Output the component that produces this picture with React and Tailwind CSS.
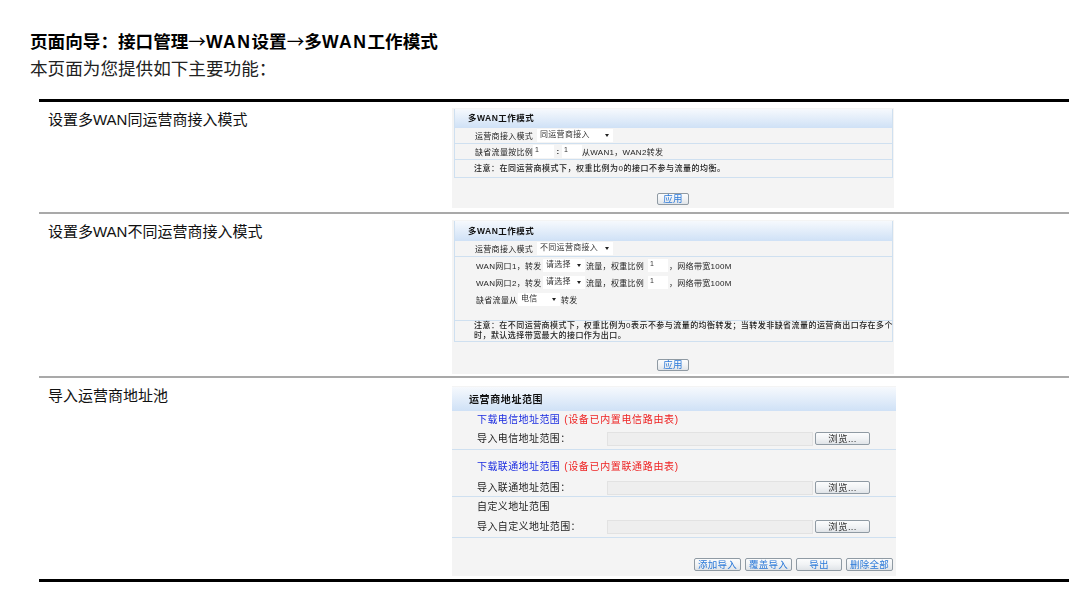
import React from "react";

const Sel = ({ w, children }) => (
  <span className={`${w} h-[13px] inline-flex items-center justify-between bg-white pl-[3px] pr-[4px] text-[8px] text-[#333] shrink-0`}>
    <span className="-mt-[2px] whitespace-nowrap">{children}</span>
    <span className="w-0 h-0 border-x-[2.5px] border-x-transparent border-t-[3px] border-t-[#222]" />
  </span>
);

const Inp = ({ w = "w-[21px]" }) => (
  <span className={`${w} h-[13px] inline-flex bg-white pl-[2px] text-[7px] leading-[9px] text-[#333] shrink-0`}>1</span>
);

const Btn = ({ w, children, color = "text-[#2a78d8]", h = "h-[12px]" }) => (
  <span className={`${w} ${h} inline-flex items-center justify-center rounded-[2px] border border-[#8f9aa3] bg-gradient-to-b from-[#fbfcfd] via-[#f1f3f5] to-[#e0e4e8] text-[9.5px] leading-none ${color} shrink-0`}>
    {children}
  </span>
);

const Header = ({ h, pl, size, children }) => (
  <div className={`${h} ${pl} ${size} flex items-center font-bold text-[#111] bg-gradient-to-b from-[#f6f9fd] to-[#cfe1f6]`}>
    {children}
  </div>
);

const rowLine = "border-b border-[#cfe0f0]";

function Panel1() {
  return (
    <div className="w-[442px] h-[100px] bg-[#f4f4f4] pt-px">
      <div className="ml-[2px] mr-[1px] border-x border-b border-[#cfe0f0]">
        <Header h="h-[19px]" pl="pl-[13px]" size="text-[8.5px] tracking-[0.5px]">多WAN工作模式</Header>
        <div className={`h-[16px] pl-[20px] flex items-center ${rowLine}`}>
          <span className="w-[62px] whitespace-nowrap mt-[1px]">运营商接入模式</span>
          <Sel w="w-[76px]">同运营商接入</Sel>
        </div>
        <div className={`h-[16px] pl-[20px] flex items-center ${rowLine}`}>
          <span className="w-[58px] whitespace-nowrap mt-[1px]">缺省流量按比例</span>
          <Inp />
          <span className="w-[8px] text-center font-bold">:</span>
          <Inp w="w-[20px]" />
          <span className="whitespace-nowrap mt-[1px]">从WAN1，WAN2转发</span>
        </div>
        <div className="h-[17px] pl-[19px] flex items-center whitespace-nowrap font-medium tracking-[0.5px]">
          注意：在同运营商模式下，权重比例为0的接口不参与流量的均衡。
        </div>
      </div>
      <div className="flex justify-center pt-[15px]">
        <Btn w="w-[32px]">应用</Btn>
      </div>
    </div>
  );
}

const WanRow = ({ n }) => (
  <div className="h-[17px] pl-[21px] flex items-center whitespace-nowrap">
    <span className="w-[67px] mt-[1px]">WAN网口{n}，转发</span>
    <Sel w="w-[42px]">请选择</Sel>
    <span className="w-[63px] pl-px mt-[1px]">流量，权重比例</span>
    <Inp w="w-[20px]" />
    <span className="pl-px mt-[1px]">，网络带宽100M</span>
  </div>
);

function Panel2() {
  return (
    <div className="w-[442px] h-[154px] bg-[#f4f4f4] pt-px">
      <div className="ml-[2px] mr-[1px] border-x border-b border-[#cfe0f0]">
        <Header h="h-[20px]" pl="pl-[13px]" size="text-[8.5px] tracking-[0.5px]">多WAN工作模式</Header>
        <div className={`h-[16px] pl-[20px] flex items-center ${rowLine}`}>
          <span className="w-[62px] whitespace-nowrap mt-[1px]">运营商接入模式</span>
          <Sel w="w-[76px]">不同运营商接入</Sel>
        </div>
        <div className={`h-[64px] ${rowLine}`}>
          <WanRow n={1} />
          <WanRow n={2} />
          <div className="h-[17px] pl-[21px] flex items-center whitespace-nowrap">
            <span className="w-[42px] mt-[1px]">缺省流量从</span>
            <Sel w="w-[42px]">电信</Sel>
            <span className="pl-px mt-[1px]">转发</span>
          </div>
        </div>
        <div className="h-[20px] pl-[19px] leading-[10px] font-medium tracking-[0.45px]">
          <div className="whitespace-nowrap">注意：在不同运营商模式下，权重比例为0表示不参与流量的均衡转发；当转发非缺省流量的运营商出口存在多个</div>
          <div className="whitespace-nowrap">时，默认选择带宽最大的接口作为出口。</div>
        </div>
      </div>
      <div className="flex justify-center pt-[17px]">
        <Btn w="w-[32px]">应用</Btn>
      </div>
    </div>
  );
}

const ImportRow = ({ label }) => (
  <div className="flex items-center h-[15px] whitespace-nowrap">
    <span className="w-[130px] tracking-[0.4px]">{label}</span>
    <span className="w-[206px] h-[14px] bg-[#eeeeee] border border-[#e2e2e2]" />
    <Btn w="w-[55px] ml-[2px]" h="h-[13px]" color="text-[#333]">浏览...</Btn>
  </div>
);

const Dl = ({ a, b }) => (
  <div className="h-[15px] flex items-center whitespace-nowrap tracking-[0.4px]">
    <span className="text-[#1a2be0]">{a}</span>
    <span className="text-[#ee2222] ml-[4px] tracking-[0.65px]">{b}</span>
  </div>
);

function Panel3() {
  return (
    <div className="w-[444px] h-[190px] bg-[#f4f4f4] pt-px text-[10px]">
      <Header h="h-[24px]" pl="pl-[17px]" size="text-[10px] tracking-[0.6px]">运营商地址范围</Header>
      <div className="h-[39px] pl-[25px] pt-[1px] border-b border-[#cfe0f0]">
        <Dl a="下载电信地址范围" b="(设备已内置电信路由表)" />
        <div className="mt-[4px]"><ImportRow label="导入电信地址范围：" /></div>
      </div>
      <div className="h-[47px] pl-[25px] pt-[9px] border-b border-[#cfe0f0]">
        <Dl a="下载联通地址范围" b="(设备已内置联通路由表)" />
        <div className="mt-[6px]"><ImportRow label="导入联通地址范围：" /></div>
      </div>
      <div className="h-[41px] pl-[25px] pt-[2px] border-b border-[#cfe0f0]">
        <div className="h-[15px] flex items-center tracking-[0.4px]">自定义地址范围</div>
        <div className="mt-[5px]"><ImportRow label="导入自定义地址范围：" /></div>
      </div>
      <div className="flex justify-end gap-[4px] pt-[20px] pr-[3px]">
        <Btn w="w-[47px]" h="h-[13px]">添加导入</Btn>
        <Btn w="w-[47px]" h="h-[13px]">覆盖导入</Btn>
        <Btn w="w-[46px]" h="h-[13px]">导出</Btn>
        <Btn w="w-[47px]" h="h-[13px]">删除全部</Btn>
      </div>
    </div>
  );
}

const Row = ({ label, children, cls, top = "pt-[6px]" }) => (
  <div className={`flex items-start ${cls}`}>
    <div className="w-[413px] shrink-0 pl-[9px] pt-[8px] text-[15px] leading-5 text-[#111]">{label}</div>
    <div className={`${top} text-[8px] leading-[11px] text-[#222] tracking-[0.3px] blur-[0.3px]`}>{children}</div>
  </div>
);

const Arrow = () => <span className="font-['Noto_Sans_CJK_SC'] font-normal">→</span>;
const Wan = () => <span className="tracking-[1.5px]">WAN</span>;

export default function App() {
  return (
    <div className="w-[1069px] h-[601px] overflow-hidden bg-white font-['Liberation_Sans','Noto_Sans_CJK_SC',sans-serif] text-black">
      <div className="pl-[30px] pt-[29px]">
        <div className="text-[17.6px] leading-[24px] font-bold whitespace-nowrap">
          页面向导：接口管理<Arrow /><Wan />设置<Arrow />多<Wan />工作模式
        </div>
        <div className="text-[17.6px] leading-[30px] text-[#222]">本页面为您提供如下主要功能：</div>
      </div>
      <div className="ml-[39px] mt-[15px] border-y-[3px] border-black">
        <Row label="设置多WAN同运营商接入模式" cls="h-[112px] border-b-2 border-[#a9a9a9]"><Panel1 /></Row>
        <Row label="设置多WAN不同运营商接入模式" cls="h-[164px] border-b-2 border-[#a9a9a9]"><Panel2 /></Row>
        <Row label="导入运营商地址池" cls="h-[201px]" top="pt-[8px]"><Panel3 /></Row>
      </div>
    </div>
  );
}
